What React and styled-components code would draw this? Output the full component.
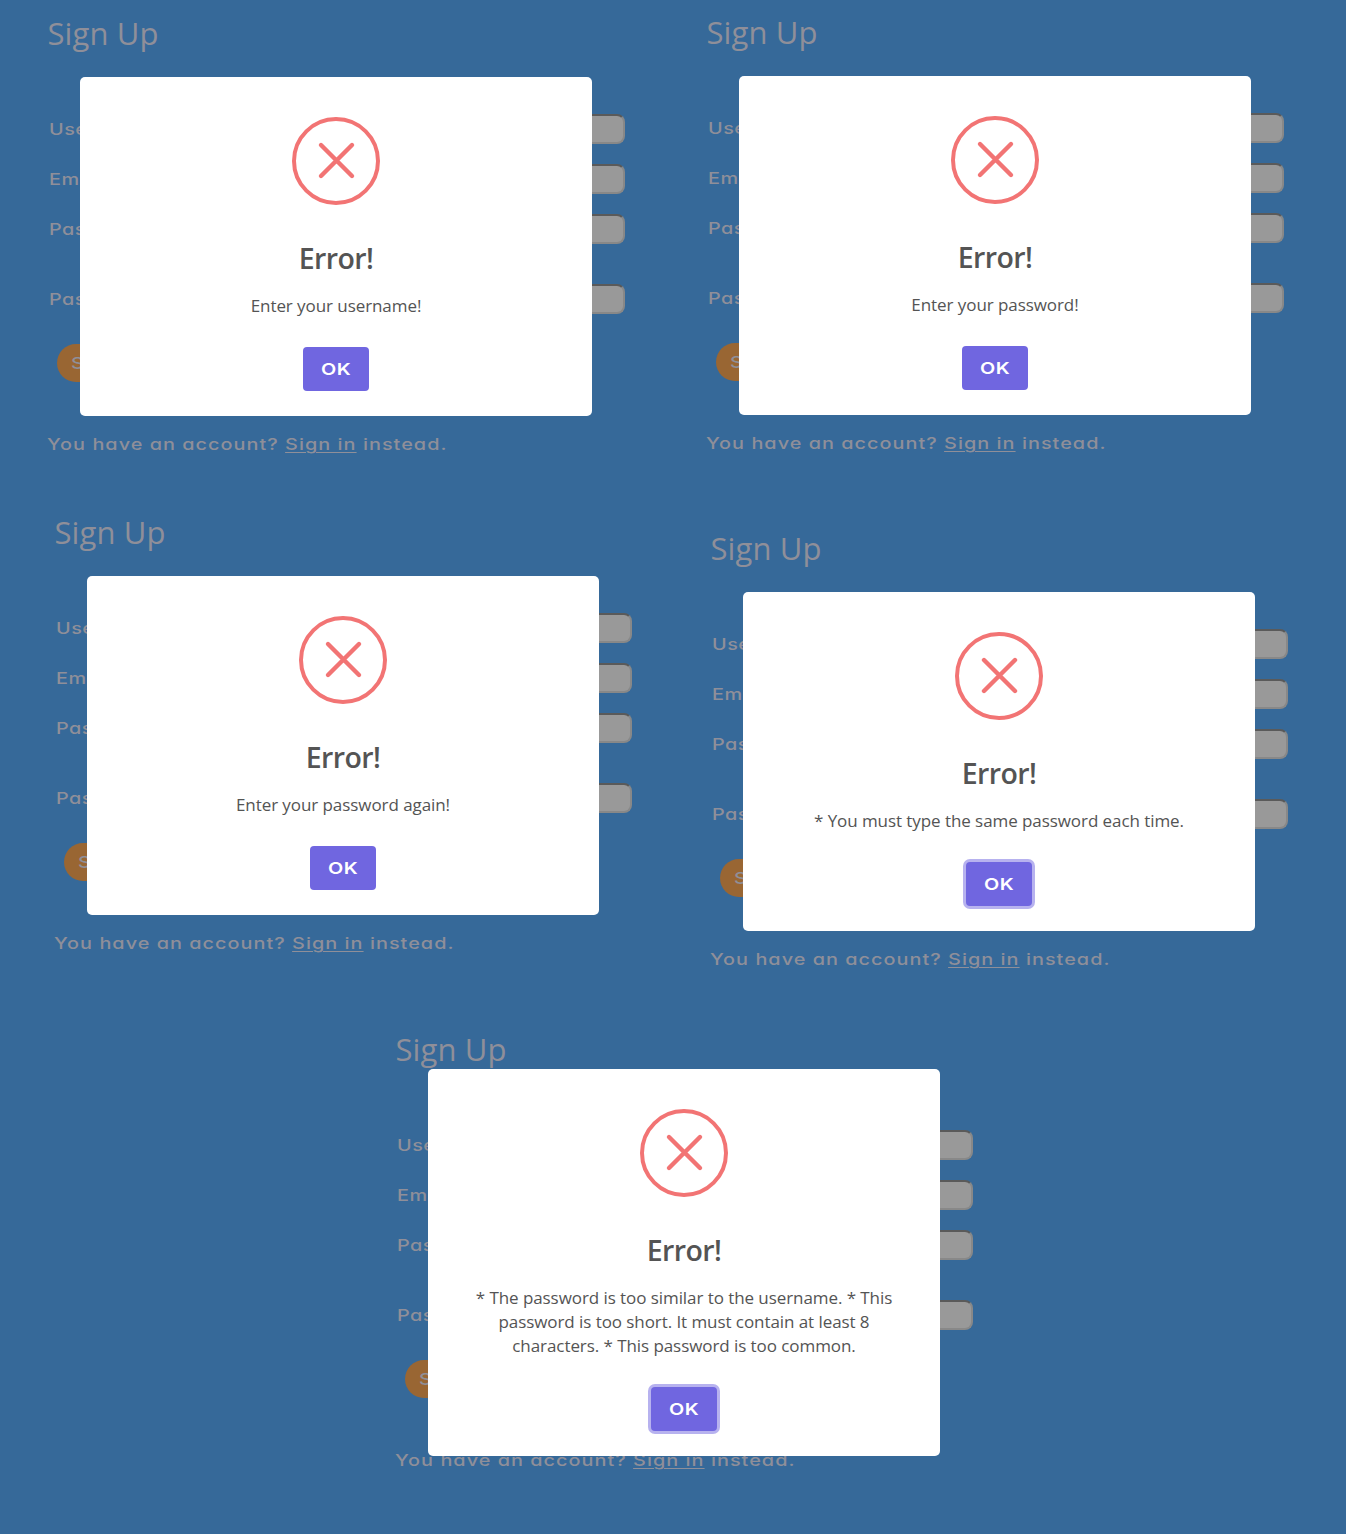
import React from "react";
import styled, { createGlobalStyle } from "styled-components";

const GlobalStyle = createGlobalStyle`
  * { box-sizing: border-box; }
  body {
    margin: 0;
    background: #366999;
    font-family: "Open Sans", "Noto Sans", sans-serif;
  }
`;

const Page = styled.main`
  width: 1346px;
  height: 1534px;
  overflow: hidden;
  background: #366999;
  display: grid;
  grid-template-rows: 499px 517px 518px;
`;

const Row = styled.section`
  display: flex;
  align-items: flex-start;
  gap: ${(p) => p.$gap || 0}px;
  padding-left: ${(p) => p.$indent}px;
`;

const Scene = styled.article`
  position: relative;
  flex: none;
  width: 577px;
  margin-top: ${(p) => p.$shift || 0}px;
  color: #8f8f99;
`;

const Title = styled.h1`
  margin: 0 0 0 -0.5px;
  padding-top: 11px;
  height: 114px;
  font-size: 31px;
  font-weight: 400;
  line-height: 44px;
  letter-spacing: 0.1px;
`;

const Wide = styled.span`
  display: inline-block;
  transform: scaleX(1.24);
  transform-origin: ${(p) => p.$origin || "left"} center;
  font-family: Inter, "DejaVu Sans", sans-serif;
  font-feature-settings: "cv11";
  font-size: 16px;
  font-weight: ${(p) => p.$weight || 450};
  line-height: 20px;
  letter-spacing: ${(p) => p.$spacing ?? 0.83}px;
  white-space: nowrap;
`;

const Form = styled.form`
  display: flex;
  flex-direction: column;
  gap: 20px;
`;

const Field = styled.label`
  display: flex;
  align-items: center;
  justify-content: space-between;
  height: 30px;
  padding-left: 0.5px;
  margin-top: ${(p) => (p.$spaced ? 20 : 0)}px;
`;

const Input = styled.input`
  width: 360px;
  height: 30px;
  border: 2px solid;
  border-color: #5a5a5a #888 #888 #5a5a5a;
  border-radius: 8px;
  background: #999;
`;

const Submit = styled.button`
  align-self: flex-start;
  margin: 10px 0 0 9px;
  height: 38px;
  padding: 0 36px 0 13.5px;
  border: 0;
  border-radius: 19px;
  background: #996633;
  color: #8f8f99;
`;

const Footer = styled.p`
  margin: 52px 0 0 -1px;
  line-height: 20px;
`;

const Link = styled.a`
  color: inherit;
  text-decoration: underline;
  text-decoration-thickness: 1px;
  text-underline-offset: 2px;
`;

const Modal = styled.div`
  position: absolute;
  top: ${(p) => p.$top}px;
  left: 32px;
  width: 512px;
  padding: 40px 45px 25px;
  border-radius: 5px;
  background: #fff;
  color: #545454;
  display: flex;
  flex-direction: column;
  align-items: center;
`;

const Icon = styled.svg`
  width: 88px;
  height: 88px;
  fill: none;
  stroke: #f27474;
`;

const Heading = styled.h2`
  margin: 31px 0 0;
  font-size: 28.5px;
  font-weight: 600;
  line-height: 44px;
  letter-spacing: -0.6px;
`;

const Message = styled.p`
  margin: 14px 0 0;
  width: 422px;
  text-align: center;
  font-size: 17px;
  line-height: 24px;
  letter-spacing: -0.07px;
`;

const Confirm = styled.button`
  width: 66px;
  height: 44px;
  margin-top: 29px;
  padding: 0;
  border: 0;
  border-radius: 4px;
  background: #7066e0;
  color: #fff;
  box-shadow: ${(p) => (p.$focused ? "0 0 0 3px #b7b2ef" : "none")};
`;

function ErrorIcon() {
  return (
    <Icon viewBox="0 0 88 88" aria-hidden="true">
      <circle cx="44" cy="44" r="42" strokeWidth="4" />
      <path d="M29 28 60 59M60 28 29 59" strokeWidth="4.4" strokeLinecap="round" />
    </Icon>
  );
}

const FIELDS = ["Username", "Email", "Password", "Password"];

function SignUp({ message, focused, shift, modalTop = 77 }) {
  return (
    <Scene $shift={shift}>
      <Title>Sign Up</Title>
      <Form onSubmit={(e) => e.preventDefault()}>
        {FIELDS.map((name, i) => (
          <Field key={i} $spaced={i === 3}>
            <Wide $spacing={0.4}>{name}</Wide>
            <Input />
          </Field>
        ))}
        <Submit type="submit">
          <Wide>Sign Up</Wide>
        </Submit>
      </Form>
      <Footer>
        <Wide>
          You have an account? <Link>Sign in</Link> instead.
        </Wide>
      </Footer>
      <Modal $top={modalTop} role="dialog">
        <ErrorIcon />
        <Heading>Error!</Heading>
        <Message>{message}</Message>
        <Confirm $focused={focused}>
          <Wide $origin="center" $weight={600} $spacing={0.4}>OK</Wide>
        </Confirm>
      </Modal>
    </Scene>
  );
}

export default function App() {
  return (
    <>
      <GlobalStyle />
      <Page>
        <Row $indent={48} $gap={82}>
          <SignUp message="Enter your username!" />
          <SignUp message="Enter your password!" shift={-1} />
        </Row>
        <Row $indent={55} $gap={79}>
          <SignUp message="Enter your password again!" />
          <SignUp message="* You must type the same password each time." focused shift={16} />
        </Row>
        <Row $indent={396}>
          <SignUp
            message="* The password is too similar to the username. * This password is too short. It must contain at least 8 characters. * This password is too common."
            focused
            modalTop={53}
          />
        </Row>
      </Page>
    </>
  );
}
